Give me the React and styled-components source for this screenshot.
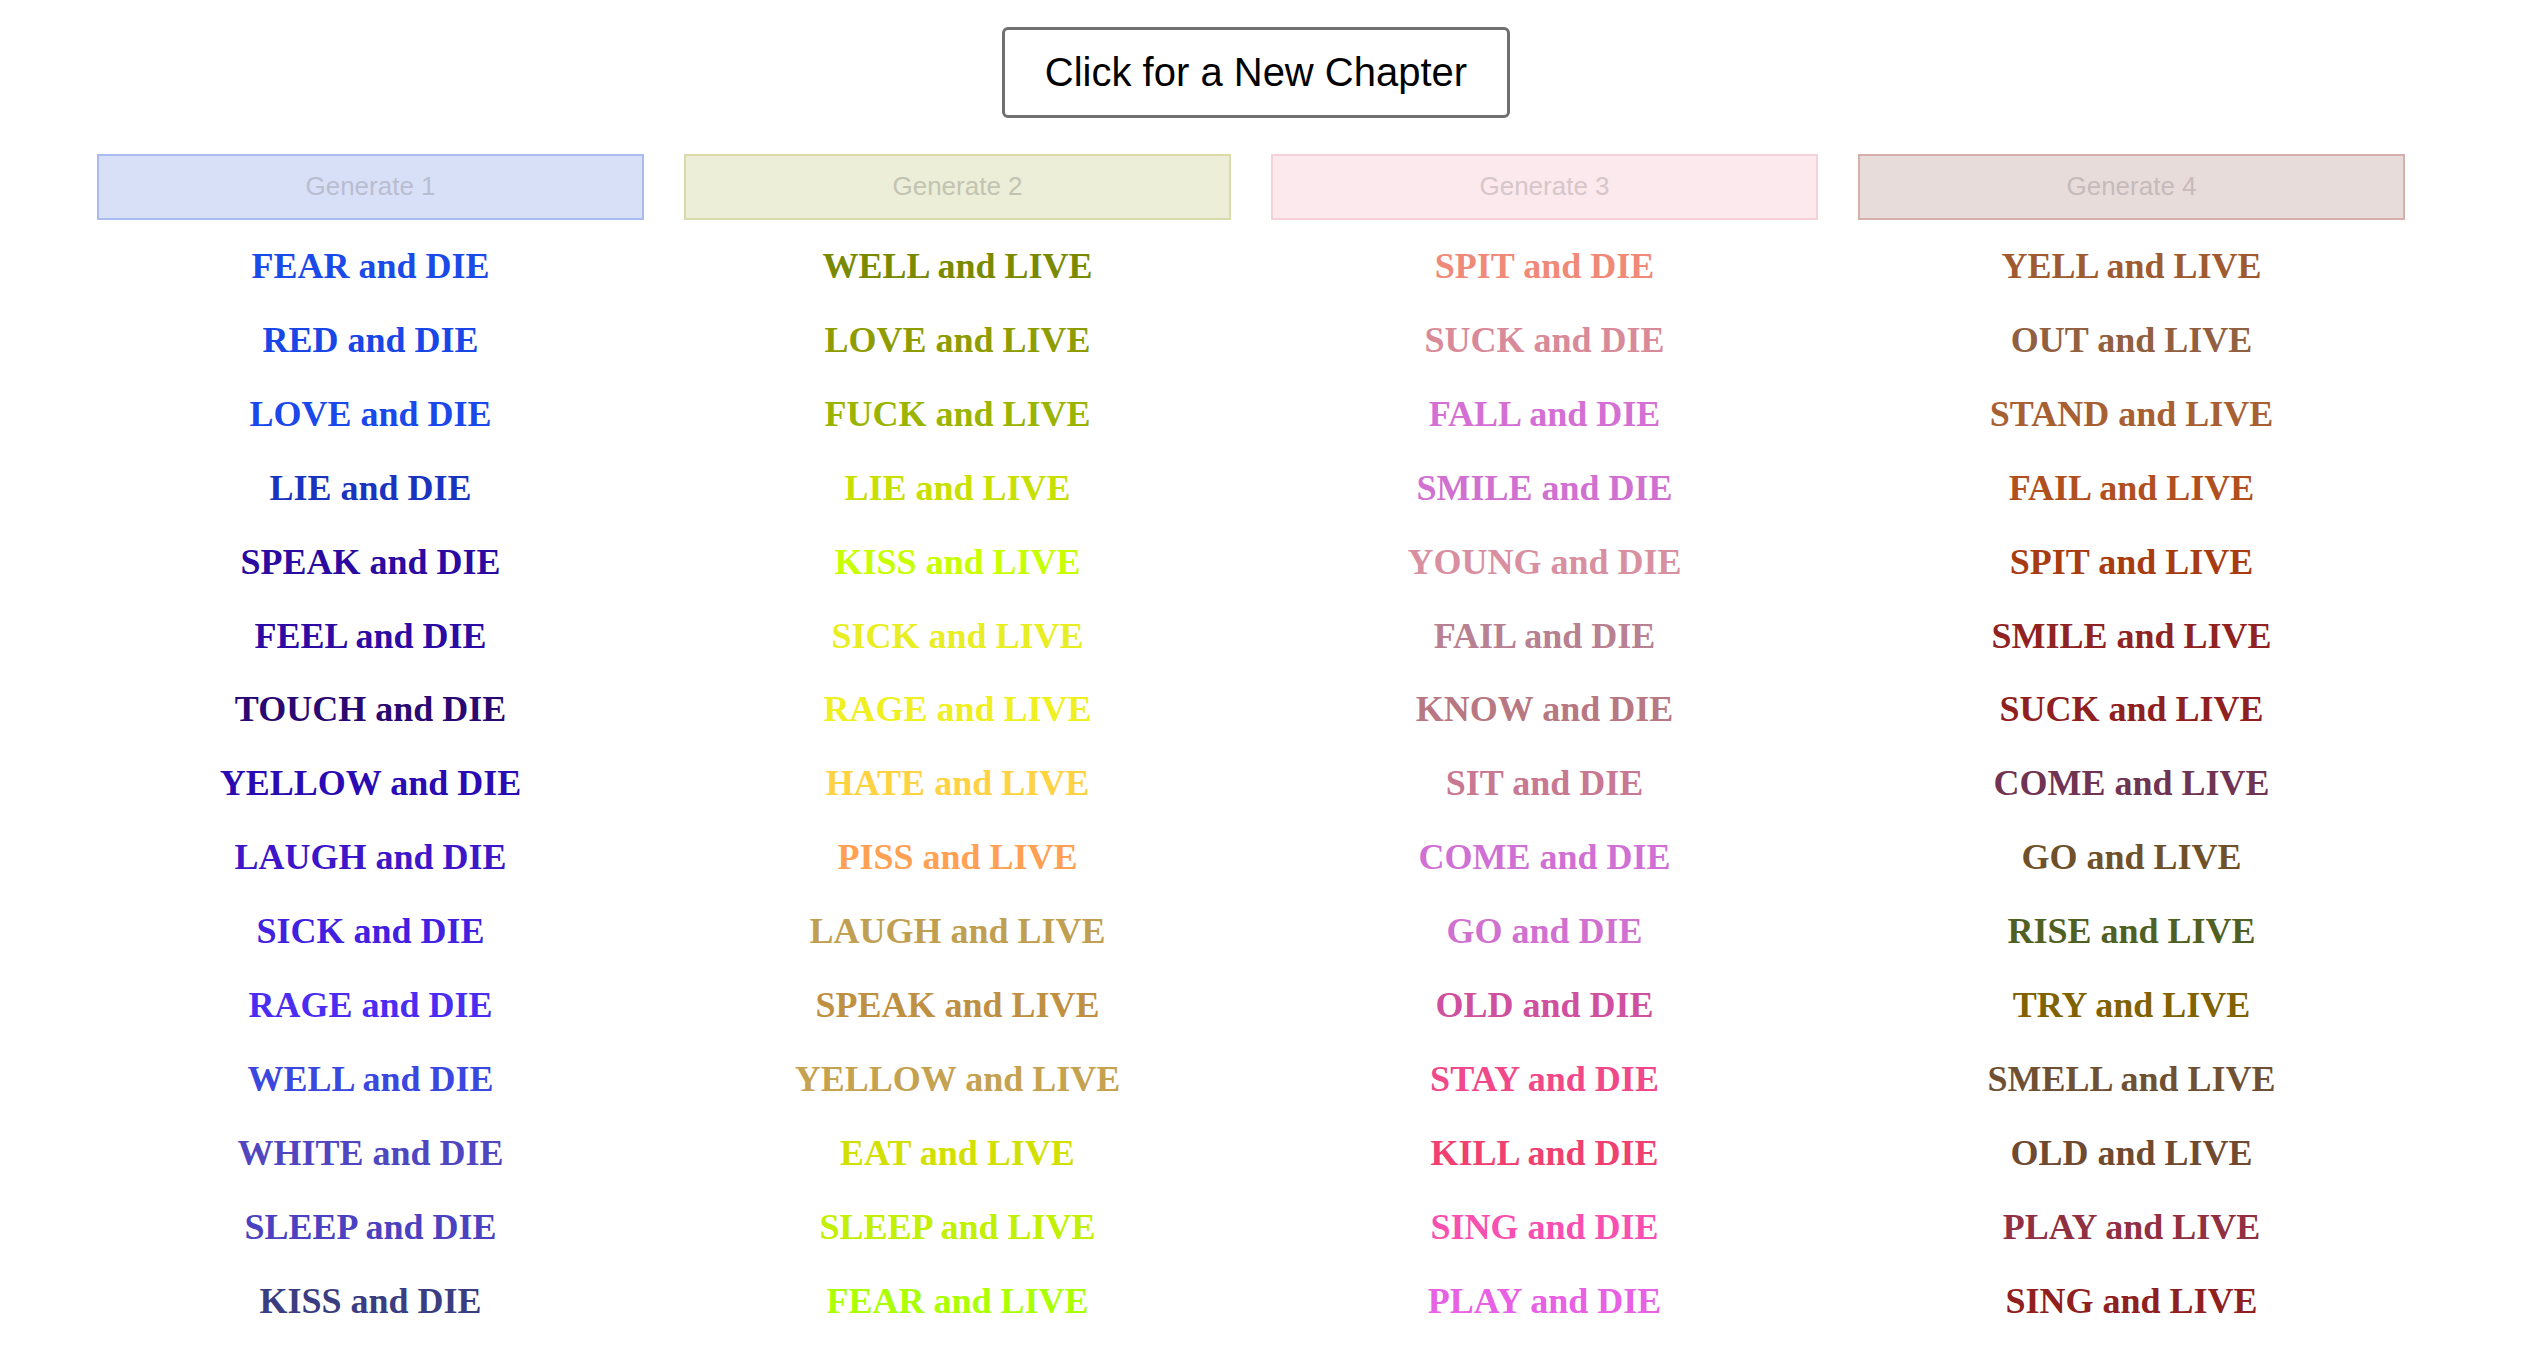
import React from "react";
import styled, { createGlobalStyle } from "styled-components";

const GlobalStyle = createGlobalStyle`
  html, body {
    margin: 0;
    padding: 0;
    background: #ffffff;
  }
  body {
    font-family: "Liberation Sans", Arial, sans-serif;
  }
`;

const Page = styled.div`
  width: 2504px;
  box-sizing: border-box;
  padding: 27px 79px 40px 77px;
`;

const TopBar = styled.div`
  display: flex;
  justify-content: center;
  padding-left: 10px;
`;

const ChapterButton = styled.button`
  font-family: "Liberation Sans", Arial, sans-serif;
  font-size: 40px;
  line-height: 46px;
  color: #000000;
  background: #ffffff;
  border: 3px solid #707070;
  border-radius: 6px;
  padding: 19px 40px 20px;
  cursor: pointer;
`;

const Columns = styled.div`
  display: grid;
  grid-template-columns: repeat(4, 587px);
  margin-top: 36px;
`;

const Column = styled.div`
  display: flex;
  flex-direction: column;
  align-items: stretch;
`;

const GenerateBox = styled.button`
  margin: 0 20px;
  height: 66px;
  box-sizing: border-box;
  font-family: "Liberation Sans", Arial, sans-serif;
  font-size: 26px;
  color: ${(p) => p.$text};
  background: ${(p) => p.$bg};
  border: 2px solid ${(p) => p.$border};
  border-radius: 0;
  padding: 0 0 2px;
`;

const WordList = styled.div`
  display: flex;
  flex-direction: column;
  margin-top: 10px;
`;

const Word = styled.div`
  font-family: "Liberation Serif", "Times New Roman", serif;
  font-weight: bold;
  font-size: 36px;
  line-height: 73.9px;
  text-align: center;
  color: ${(p) => p.$color};
`;

const columns = [
  {
    label: "Generate 1",
    bg: "#d8e0f8",
    border: "#a9bcf1",
    text: "#b9bdd0",
    words: [
      ["FEAR and DIE", "#1a4ae8"],
      ["RED and DIE", "#1946e6"],
      ["LOVE and DIE", "#1a48ea"],
      ["LIE and DIE", "#1a34c0"],
      ["SPEAK and DIE", "#2a0aa0"],
      ["FEEL and DIE", "#2c0aa4"],
      ["TOUCH and DIE", "#2a0872"],
      ["YELLOW and DIE", "#2a0ab2"],
      ["LAUGH and DIE", "#3c16c8"],
      ["SICK and DIE", "#4220e2"],
      ["RAGE and DIE", "#4a2cf2"],
      ["WELL and DIE", "#3a48e0"],
      ["WHITE and DIE", "#5046c0"],
      ["SLEEP and DIE", "#4a42c0"],
      ["KISS and DIE", "#3a3e80"],
    ],
  },
  {
    label: "Generate 2",
    bg: "#eceed8",
    border: "#d9dcaa",
    text: "#c2c4b2",
    words: [
      ["WELL and LIVE", "#7a8a00"],
      ["LOVE and LIVE", "#8e9c00"],
      ["FUCK and LIVE", "#9ab400"],
      ["LIE and LIVE", "#c8e000"],
      ["KISS and LIVE", "#c8ff00"],
      ["SICK and LIVE", "#e8ee22"],
      ["RAGE and LIVE", "#f0f020"],
      ["HATE and LIVE", "#ffd242"],
      ["PISS and LIVE", "#ffa052"],
      ["LAUGH and LIVE", "#c0a050"],
      ["SPEAK and LIVE", "#c09042"],
      ["YELLOW and LIVE", "#c4a250"],
      ["EAT and LIVE", "#d2e000"],
      ["SLEEP and LIVE", "#c2f000"],
      ["FEAR and LIVE", "#aaff00"],
    ],
  },
  {
    label: "Generate 3",
    bg: "#fbe9ee",
    border: "#f5d1da",
    text: "#d6c6ca",
    words: [
      ["SPIT and DIE", "#f08a78"],
      ["SUCK and DIE", "#d88a98"],
      ["FALL and DIE", "#d470d4"],
      ["SMILE and DIE", "#d070d0"],
      ["YOUNG and DIE", "#d890a0"],
      ["FAIL and DIE", "#b88090"],
      ["KNOW and DIE", "#b87882"],
      ["SIT and DIE", "#c87890"],
      ["COME and DIE", "#d070d4"],
      ["GO and DIE", "#d070d0"],
      ["OLD and DIE", "#d050a0"],
      ["STAY and DIE", "#f04888"],
      ["KILL and DIE", "#f04070"],
      ["SING and DIE", "#f850b0"],
      ["PLAY and DIE", "#e860e4"],
    ],
  },
  {
    label: "Generate 4",
    bg: "#e8dcda",
    border: "#d3b1aa",
    text: "#c6baba",
    words: [
      ["YELL and LIVE", "#a05a30"],
      ["OUT and LIVE", "#906040"],
      ["STAND and LIVE", "#a86032"],
      ["FAIL and LIVE", "#b05020"],
      ["SPIT and LIVE", "#a83c10"],
      ["SMILE and LIVE", "#902222"],
      ["SUCK and LIVE", "#902020"],
      ["COME and LIVE", "#703452"],
      ["GO and LIVE", "#705028"],
      ["RISE and LIVE", "#506022"],
      ["TRY and LIVE", "#806200"],
      ["SMELL and LIVE", "#705032"],
      ["OLD and LIVE", "#704a30"],
      ["PLAY and LIVE", "#903042"],
      ["SING and LIVE", "#902020"],
    ],
  },
];

export default function App() {
  return (
    <>
      <GlobalStyle />
      <Page>
        <TopBar>
          <ChapterButton>Click for a New Chapter</ChapterButton>
        </TopBar>
        <Columns>
          {columns.map((col) => (
            <Column key={col.label}>
              <GenerateBox $bg={col.bg} $border={col.border} $text={col.text}>
                {col.label}
              </GenerateBox>
              <WordList>
                {col.words.map(([w, c], i) => (
                  <Word key={i} $color={c}>
                    {w}
                  </Word>
                ))}
              </WordList>
            </Column>
          ))}
        </Columns>
      </Page>
    </>
  );
}
